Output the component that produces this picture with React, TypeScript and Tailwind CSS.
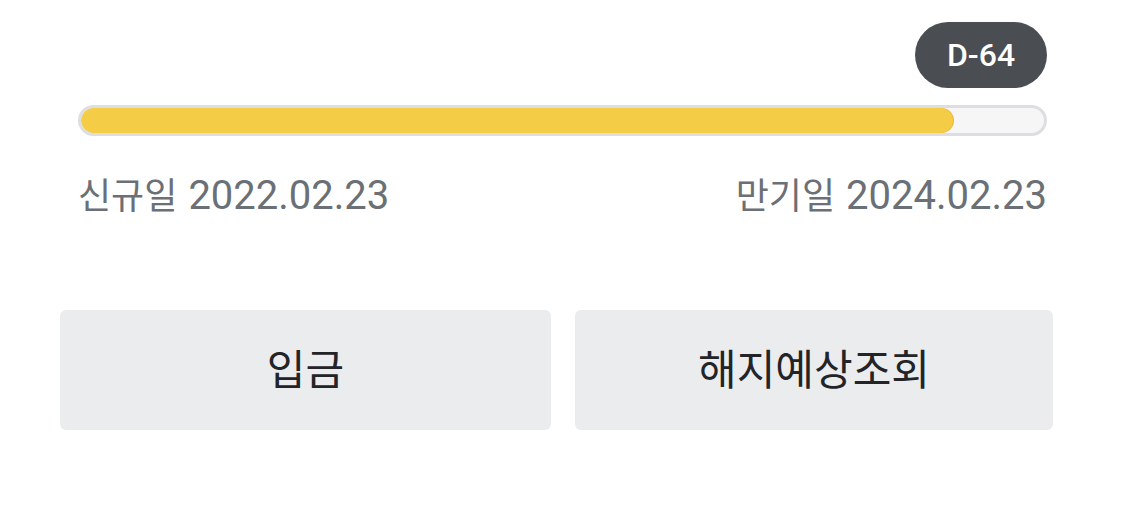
const font = { fontFamily: 'Roboto, "Noto Sans CJK KR", sans-serif' };

function DateLabel({ label, date }: Readonly<{ label: string; date: string }>) {
  return (
    <span className="flex items-baseline leading-none text-[#6b6f76]">
      <span className="text-[36px]">{label}</span>
      <span className="ml-[11px] text-[40px]">{date}</span>
    </span>
  );
}

export default function App() {
  const progress = 90.6;

  return (
    <div className="w-[1125px] h-[531px] bg-white" style={font}>
      <div className="px-[78px] pt-[22px]">
        <div className="flex justify-end">
          <span className="flex h-[66px] w-[132px] items-center justify-center rounded-full bg-[#4a4d52] text-[32px] font-medium text-white">
            D-64
          </span>
        </div>
        <div className="mt-[17px] h-[31px] overflow-hidden rounded-full border-[3px] border-[#dcdee2] bg-[#f6f6f6]">
          <div
            className="h-full rounded-full bg-[#f5cc45] shadow-[1px_0_0_#edb43a]"
            style={{ width: `${progress}%` }}
          />
        </div>
        <div className="mt-[40px] flex items-center justify-between">
          <DateLabel label="신규일" date="2022.02.23" />
          <DateLabel label="만기일" date="2024.02.23" />
        </div>
      </div>

      <div className="mt-[94px] flex gap-[24px] pl-[60px] pr-[72px]">
        <button className="flex h-[120px] w-[491px] items-center justify-center rounded-[6px] bg-[#ebecee] text-[42px] text-[#232427]">
          입금
        </button>
        <button className="flex h-[120px] flex-1 items-center justify-center rounded-[6px] bg-[#ebecee] text-[42px] text-[#232427]">
          해지예상조회
        </button>
      </div>
    </div>
  );
}
